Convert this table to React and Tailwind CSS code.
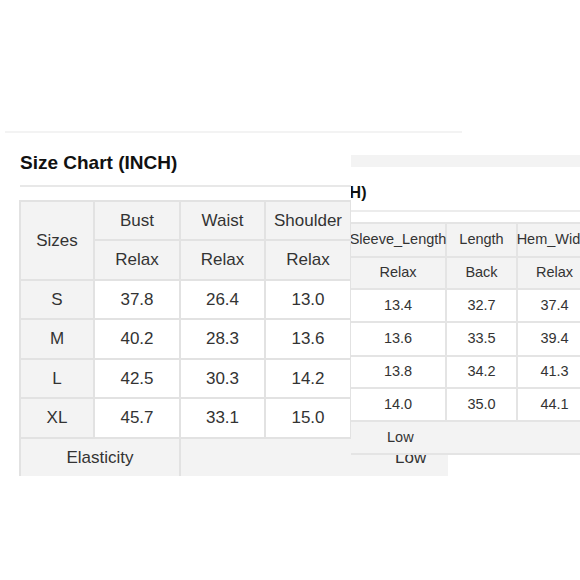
const leftRows = [
    ['S', '37.8', '26.4', '13.0'],
    ['M', '40.2', '28.3', '13.6'],
    ['L', '42.5', '30.3', '14.2'],
    ['XL', '45.7', '33.1', '15.0'],
];

const rightRows = [
    ['13.4', '32.7', '37.4', '26.0'],
    ['13.6', '33.5', '39.4', '27.6'],
    ['13.8', '34.2', '41.3', '29.1'],
    ['14.0', '35.0', '44.1', '31.1'],
];

function Cell({ children, gray, className = '' }) {
    return (
        <div
            className={`flex items-center justify-center whitespace-nowrap ${gray ? 'bg-[#f3f3f3]' : 'bg-white'} ${className}`}
        >
            {children}
        </div>
    );
}

// the overlapping, scrolled copy of the chart on the right
function OverlayChart() {
    return (
        <div className="absolute left-[351px] top-[155px] w-[229px] h-[300px] bg-white overflow-hidden">
            <div className="h-[12px] bg-[#f3f3f3]"></div>
            <div className="mt-[16px] ml-[-117px] text-[16px] leading-[20px] font-bold text-[#111] whitespace-nowrap">
                Size Chart (INCH)
            </div>
            <div className="mt-[7px] h-[2px] bg-[#ececec]"></div>
            <div className="mt-[10px] ml-[-2px] w-max grid grid-cols-[94px_69px_73px_80px] grid-rows-[32px_30px_31px_32px_30px_31px_31px] gap-[2px] p-[2px] bg-[#e4e4e4] text-[14.5px] text-[#333]">
                <Cell gray>Sleeve_Length</Cell>
                <Cell gray>Length</Cell>
                <Cell gray>Hem_Width</Cell>
                <Cell gray>Bottom</Cell>
                <Cell gray>Relax</Cell>
                <Cell gray>Back</Cell>
                <Cell gray>Relax</Cell>
                <Cell gray>Relax</Cell>
                {rightRows.map((row, i) =>
                    row.map((v, j) => <Cell key={`${i}-${j}`}>{v}</Cell>)
                )}
                <Cell gray className="col-span-4 !justify-start pl-[36px]">Low</Cell>
            </div>
        </div>
    );
}

export default function App() {
    return (
        <div className="relative w-[580px] h-[580px] bg-white overflow-hidden font-['Liberation_Sans',Arial,sans-serif]">
            <div className="pt-[131px]">
                <div className="ml-[5px] w-[457px] h-[2px] bg-[#f3f3f3]"></div>
                <h1 className="mt-[19px] ml-[20px] text-[19px] leading-[22px] font-bold text-[#111]">
                    Size Chart (INCH)
                </h1>
                <div className="mt-[11px] ml-[20px] w-[440px] h-[2px] bg-[#e8e8e8]"></div>

                {/* columns past Shoulder sit under the overlay, so they stay empty */}
                <div className="mt-[13px] ml-[19px] w-[429px] h-[276px] overflow-hidden">
                    <div className="w-max grid grid-cols-[72px_84px_83px_84px_120px] grid-rows-[37px_38px_37px_38px_37px_38px_37px] gap-[2px] p-[2px] bg-[#e2e2e2] text-[17px] text-[#333]">
                        <Cell gray className="row-span-2">Sizes</Cell>
                        <Cell gray>Bust</Cell>
                        <Cell gray>Waist</Cell>
                        <Cell gray>Shoulder</Cell>
                        <Cell gray></Cell>
                        <Cell gray>Relax</Cell>
                        <Cell gray>Relax</Cell>
                        <Cell gray>Relax</Cell>
                        <Cell gray></Cell>
                        {leftRows.map((row, i) => [
                            ...row.map((v, j) => (
                                <Cell key={`${i}-${j}`} gray={j === 0}>
                                    {v}
                                </Cell>
                            )),
                            <Cell key={`${i}-x`}></Cell>,
                        ])}
                        <Cell gray className="col-span-2">Elasticity</Cell>
                        <Cell gray className="col-span-3 !justify-start pl-[214px]">Low</Cell>
                    </div>
                </div>
            </div>

            <OverlayChart />
        </div>
    );
}
